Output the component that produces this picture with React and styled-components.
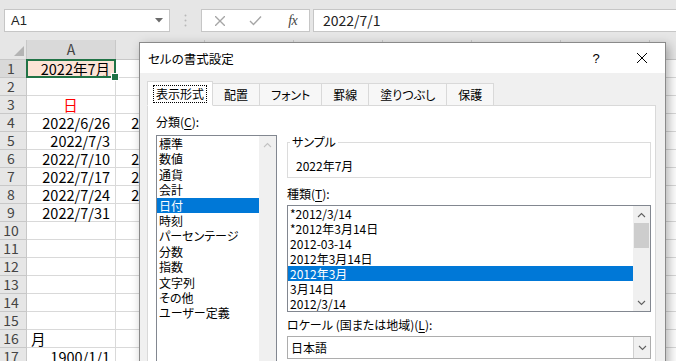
import React from "react";
import styled, { createGlobalStyle } from "styled-components";

const GlobalStyle = createGlobalStyle`
  html, body { margin: 0; padding: 0; background: #fff; }
  body {
    font-family: "Noto Sans CJK JP", "Noto Sans", sans-serif;
    overflow: hidden;
  }
  * { box-sizing: border-box; }
`;

const Screen = styled.div`
  position: relative;
  width: 676px;
  height: 361px;
  overflow: hidden;
  background: #fff;
`;

/* ---------- formula bar ---------- */

const FormulaBar = styled.div`
  display: flex;
  align-items: flex-start;
  height: 40px;
  padding-top: 9px;
  background: #e6e6e6;
`;

const NameBox = styled.div`
  display: flex;
  align-items: center;
  justify-content: space-between;
  margin-left: 4px;
  width: 166px;
  height: 23px;
  padding: 0 6px;
  background: #fff;
  border: 1px solid #c6c6c6;
  font-family: "Liberation Sans", sans-serif;
  font-size: 13px;
  color: #222;
`;

const Grip = styled.div`
  width: 31px;
  height: 23px;
  display: flex;
  align-items: center;
  justify-content: center;
`;

const FxBox = styled.div`
  display: flex;
  width: 109px;
  height: 23px;
  background: #fff;
  border: 1px solid #c6c6c6;
`;

const FxButton = styled.div`
  flex: 1;
  display: flex;
  align-items: center;
  justify-content: center;
`;

const FxLabel = styled.span`
  font-family: "Liberation Serif", serif;
  font-style: italic;
  font-size: 14px;
  color: #444;
  letter-spacing: -0.5px;
  margin-left: 3px;
`;

const FormulaInput = styled.div`
  flex: 1;
  margin-left: 3px;
  height: 23px;
  padding-left: 9px;
  background: #fff;
  border: 1px solid #c6c6c6;
  border-right: none;
  font-size: 14px;
  line-height: 21px;
  color: #222;
`;

/* ---------- sheet ---------- */

const Sheet = styled.div`
  display: grid;
  grid-template-columns: 27px repeat(8, 89px);
  grid-template-rows: 20px;
  grid-auto-rows: 18px;
`;

const Corner = styled.div`
  background: #e6e6e6;
  border-right: 1px solid #c8c8c8;
  border-bottom: 1px solid #c8c8c8;
  display: flex;
  align-items: flex-end;
  justify-content: flex-end;
  padding: 0 2px 3px 0;
`;

const ColHeader = styled.div`
  background: ${p => (p.$active ? "#d9d9d9" : "#e6e6e6")};
  border-right: 1px solid #c8c8c8;
  border-bottom: 1px solid #c8c8c8;
  text-align: center;
  font-size: 14px;
  line-height: 19px;
  color: #444;
`;

const RowHeader = styled.div`
  background: ${p => (p.$active ? "#d9d9d9" : "#e6e6e6")};
  border-right: 1px solid #c8c8c8;
  border-bottom: 1px solid #c8c8c8;
  text-align: center;
  padding-right: 4px;
  font-size: 14px;
  line-height: 17px;
  color: #444;
`;

const Cell = styled.div`
  position: relative;
  z-index: ${p => (p.$selected ? 2 : 0)};
  border-right: 1px solid #d9d9d9;
  border-bottom: 1px solid #d9d9d9;
  padding: 0 5px 0 4px;
  background: ${p => p.$fill || "#fff"};
  color: ${p => p.$color || "#000"};
  text-align: ${p => p.$align || "right"};
  font-size: 14.5px;
  line-height: 17px;
  white-space: nowrap;

  ${p =>
    p.$selected &&
    `
    &::after {
      content: "";
      position: absolute;
      inset: -1px -1px -1px -1px;
      border: 2px solid #217346;
    }
    &::before {
      content: "";
      position: absolute;
      right: -4px;
      bottom: -4px;
      width: 6px;
      height: 6px;
      background: #217346;
      border: 1px solid #fff;
      z-index: 3;
    }
  `}
`;

/* ---------- dialog ---------- */

const Dialog = styled.div`
  position: absolute;
  left: 139px;
  top: 42px;
  width: 527px;
  height: 340px;
  display: flex;
  flex-direction: column;
  background: #f0f0f0;
  border: 1px solid #8a8a8a;
  box-shadow: 3px 3px 10px rgba(0, 0, 0, 0.3);
  font-size: 12px;
  color: #000;
  font-feature-settings: "palt";
`;

const TitleBar = styled.div`
  display: flex;
  align-items: center;
  height: 30px;
  padding-left: 8px;
  background: #fff;
`;

const Title = styled.div`
  flex: 1;
  font-size: 12.5px;
`;

const CaptionButton = styled.div`
  width: 46px;
  height: 30px;
  display: flex;
  align-items: center;
  justify-content: center;
  font-family: "Liberation Sans", sans-serif;
  font-size: 13px;
`;

const DialogBody = styled.div`
  flex: 1;
  display: flex;
  flex-direction: column;
  padding: 8px 9px 0 7px;
`;

const TabRow = styled.div`
  display: flex;
  align-items: flex-end;
  height: 24px;
  position: relative;
  z-index: 1;
`;

const Tab = styled.div`
  display: flex;
  align-items: center;
  height: ${p => (p.$active ? 25 : 23)}px;
  padding: 0 ${p => (p.$active ? 5 : 11)}px;
  margin-bottom: -1px;
  background: ${p => (p.$active ? "#fff" : "#f7f7f7")};
  border: 1px solid #d9d9d9;
  border-bottom: ${p => (p.$active ? "1px solid #fff" : "1px solid #d9d9d9")};
  border-left-width: ${p => (p.$first || p.$active ? 1 : 0)}px;
`;

const FocusRect = styled.span`
  padding: 0 2px;
  border: 1px dotted #000;
  line-height: 16px;
`;

const Panel = styled.div`
  flex: 1;
  display: flex;
  padding: 6px 4px 0 8px;
  background: #fff;
  border: 1px solid #d9d9d9;
`;

const LeftCol = styled.div`
  width: 121px;
  display: flex;
  flex-direction: column;
`;

const RightCol = styled.div`
  flex: 1;
  margin-left: 10px;
  display: flex;
  flex-direction: column;
  padding-top: 22px;
`;

const Label = styled.div`
  line-height: ${p => p.$lh || 16}px;
  margin-top: ${p => p.$mt || 0}px;
  white-space: nowrap;
  u { text-decoration-thickness: 1px; text-underline-offset: 2px; }
`;

const ListBox = styled.div`
  display: flex;
  height: ${p => p.$h}px;
  margin-top: ${p => p.$mt || 0}px;
  border: 1px solid #828790;
  background: #fff;
  overflow: hidden;
`;

const ListItems = styled.div`
  flex: 1;
  min-width: 0;
`;

const ListItem = styled.div`
  height: ${p => p.$h}px;
  line-height: ${p => p.$h}px;
  padding-left: 2px;
  white-space: nowrap;
  background: ${p => (p.$selected ? "#0078d7" : "transparent")};
  color: ${p => (p.$selected ? "#fff" : "#000")};
`;

const ScrollBar = styled.div`
  width: 17px;
  display: flex;
  flex-direction: column;
  background: #f0f0f0;
`;

const ScrollArrow = styled.div`
  height: 17px;
  display: flex;
  align-items: center;
  justify-content: center;
`;

const ScrollTrack = styled.div`
  flex: 1;
  padding: 0 1px;
`;

const Thumb = styled.div`
  height: 25px;
  background: #cdcdcd;
`;

const GroupBox = styled.fieldset`
  margin: 0;
  padding: 8px 8px 3px 8px;
  border: 1px solid #dcdcdc;
  min-width: 0;

  legend {
    margin-left: -6px;
    padding: 0 2px;
    line-height: 16px;
    font-size: 12px;
  }
`;

const SampleText = styled.div`
  line-height: 16px;
`;

const Combo = styled.div`
  display: flex;
  height: 23px;
  margin-top: 3px;
  border: 1px solid #adadad;
  background: #fff;
`;

const ComboText = styled.div`
  flex: 1;
  padding-left: 3px;
  line-height: 21px;
`;

const ComboButton = styled.div`
  width: 17px;
  display: flex;
  align-items: center;
  justify-content: center;
  background: #f0f0f0;
  border-left: 1px solid #d0d0d0;
`;

/* ---------- drawings ---------- */

const Chevron = ({ up, color = "#606060" }) => (
  <svg width="9" height="6" viewBox="0 0 9 6">
    <polyline
      points={up ? "1,5 4.5,1.5 8,5" : "1,1 4.5,4.5 8,1"}
      fill="none"
      stroke={color}
      strokeWidth="1.1"
    />
  </svg>
);

const XMark = ({ size = 10, color = "#000", w = 1 }) => (
  <svg width={size} height={size} viewBox={`0 0 ${size} ${size}`}>
    <line x1="0" y1="0" x2={size} y2={size} stroke={color} strokeWidth={w} />
    <line x1={size} y1="0" x2="0" y2={size} stroke={color} strokeWidth={w} />
  </svg>
);

/* ---------- data ---------- */

const columns = ["A", "B", "C", "D", "E", "F", "G", "H"];

const rows = [
  { A: { text: "2022年7月", selected: true, fill: "#fce4d6" } },
  {},
  { A: { text: "日", align: "center", color: "#ff0000" } },
  { A: { text: "2022/6/26" }, B: { text: "2022/6/27" } },
  { A: { text: "2022/7/3" }, B: { text: "2022/7/4" } },
  { A: { text: "2022/7/10" }, B: { text: "2022/7/11" } },
  { A: { text: "2022/7/17" }, B: { text: "2022/7/18" } },
  { A: { text: "2022/7/24" }, B: { text: "2022/7/25" } },
  { A: { text: "2022/7/31" }, B: { text: "2022/8/1" } },
  {},
  {},
  {},
  {},
  {},
  {},
  { A: { text: "月", align: "left" } },
  { A: { text: "1900/1/1" } },
];

const tabs = ["表示形式", "配置", "フォント", "罫線", "塗りつぶし", "保護"];

const categories = [
  "標準", "数値", "通貨", "会計", "日付", "時刻", "パーセンテージ",
  "分数", "指数", "文字列", "その他", "ユーザー定義", "",
];

const types = [
  "*2012/3/14",
  "*2012年3月14日",
  "2012-03-14",
  "2012年3月14日",
  "2012年3月",
  "3月14日",
  "2012/3/14",
];

export default function App() {
  return (
    <Screen>
      <GlobalStyle />

      <FormulaBar>
        <NameBox>
          A1
          <svg width="8" height="5" viewBox="0 0 8 5">
            <polygon points="0,0 8,0 4,4.5" fill="#6b6b6b" />
          </svg>
        </NameBox>
        <Grip>
          <svg width="3" height="13" viewBox="0 0 3 13">
            <circle cx="1.5" cy="1.5" r="1" fill="#b8b8b8" />
            <circle cx="1.5" cy="6.5" r="1" fill="#b8b8b8" />
            <circle cx="1.5" cy="11.5" r="1" fill="#b8b8b8" />
          </svg>
        </Grip>
        <FxBox>
          <FxButton>
            <XMark size={10} color="#a6a6a6" w={1.3} />
          </FxButton>
          <FxButton>
            <svg width="13" height="11" viewBox="0 0 13 11">
              <polyline points="1,6 4.5,9.5 12,1.5" fill="none" stroke="#a6a6a6" strokeWidth="1.4" />
            </svg>
          </FxButton>
          <FxButton>
            <FxLabel>fx</FxLabel>
          </FxButton>
        </FxBox>
        <FormulaInput>2022/7/1</FormulaInput>
      </FormulaBar>

      <Sheet>
        <Corner>
          <svg width="10" height="10" viewBox="0 0 10 10">
            <polygon points="10,0 10,10 0,10" fill="#b4b4b4" />
          </svg>
        </Corner>
        {columns.map(c => (
          <ColHeader key={c} $active={c === "A"}>{c}</ColHeader>
        ))}
        {rows.map((row, i) => (
          <React.Fragment key={i}>
            <RowHeader $active={i === 0}>{i + 1}</RowHeader>
            {columns.map(c => {
              const cell = row[c] || {};
              return (
                <Cell
                  key={c}
                  $selected={cell.selected}
                  $fill={cell.fill}
                  $color={cell.color}
                  $align={cell.align}
                >
                  {cell.text}
                </Cell>
              );
            })}
          </React.Fragment>
        ))}
      </Sheet>

      <Dialog>
        <TitleBar>
          <Title>セルの書式設定</Title>
          <CaptionButton>?</CaptionButton>
          <CaptionButton>
            <XMark size={10} />
          </CaptionButton>
        </TitleBar>
        <DialogBody>
          <TabRow>
            {tabs.map((t, i) => (
              <Tab key={t} $active={i === 0} $first={i === 0}>
                {i === 0 ? <FocusRect>{t}</FocusRect> : t}
              </Tab>
            ))}
          </TabRow>
          <Panel>
            <LeftCol>
              <Label $lh={20}>分類(<u>C</u>):</Label>
              <ListBox $h={240} $mt={3}>
                <ListItems>
                  {categories.map((c, i) => (
                    <ListItem key={i} $h={15.4} $selected={c === "日付"}>{c}</ListItem>
                  ))}
                </ListItems>
                <ScrollBar>
                  <ScrollArrow>
                    <Chevron up color="#c2c2c2" />
                  </ScrollArrow>
                  <ScrollTrack />
                </ScrollBar>
              </ListBox>
            </LeftCol>
            <RightCol>
              <GroupBox>
                <legend>サンプル</legend>
                <SampleText>2022年7月</SampleText>
              </GroupBox>
              <Label $mt={8}>種類(<u>T</u>):</Label>
              <ListBox $h={107} $mt={3}>
                <ListItems>
                  {types.map((t, i) => (
                    <ListItem key={t} $h={15} $selected={i === 4}>{t}</ListItem>
                  ))}
                </ListItems>
                <ScrollBar>
                  <ScrollArrow>
                    <Chevron up />
                  </ScrollArrow>
                  <ScrollTrack>
                    <Thumb />
                  </ScrollTrack>
                  <ScrollArrow>
                    <Chevron />
                  </ScrollArrow>
                </ScrollBar>
              </ListBox>
              <Label $mt={5}>ロケール (国または地域)(<u>L</u>):</Label>
              <Combo>
                <ComboText>日本語</ComboText>
                <ComboButton>
                  <Chevron />
                </ComboButton>
              </Combo>
            </RightCol>
          </Panel>
        </DialogBody>
      </Dialog>
    </Screen>
  );
}
